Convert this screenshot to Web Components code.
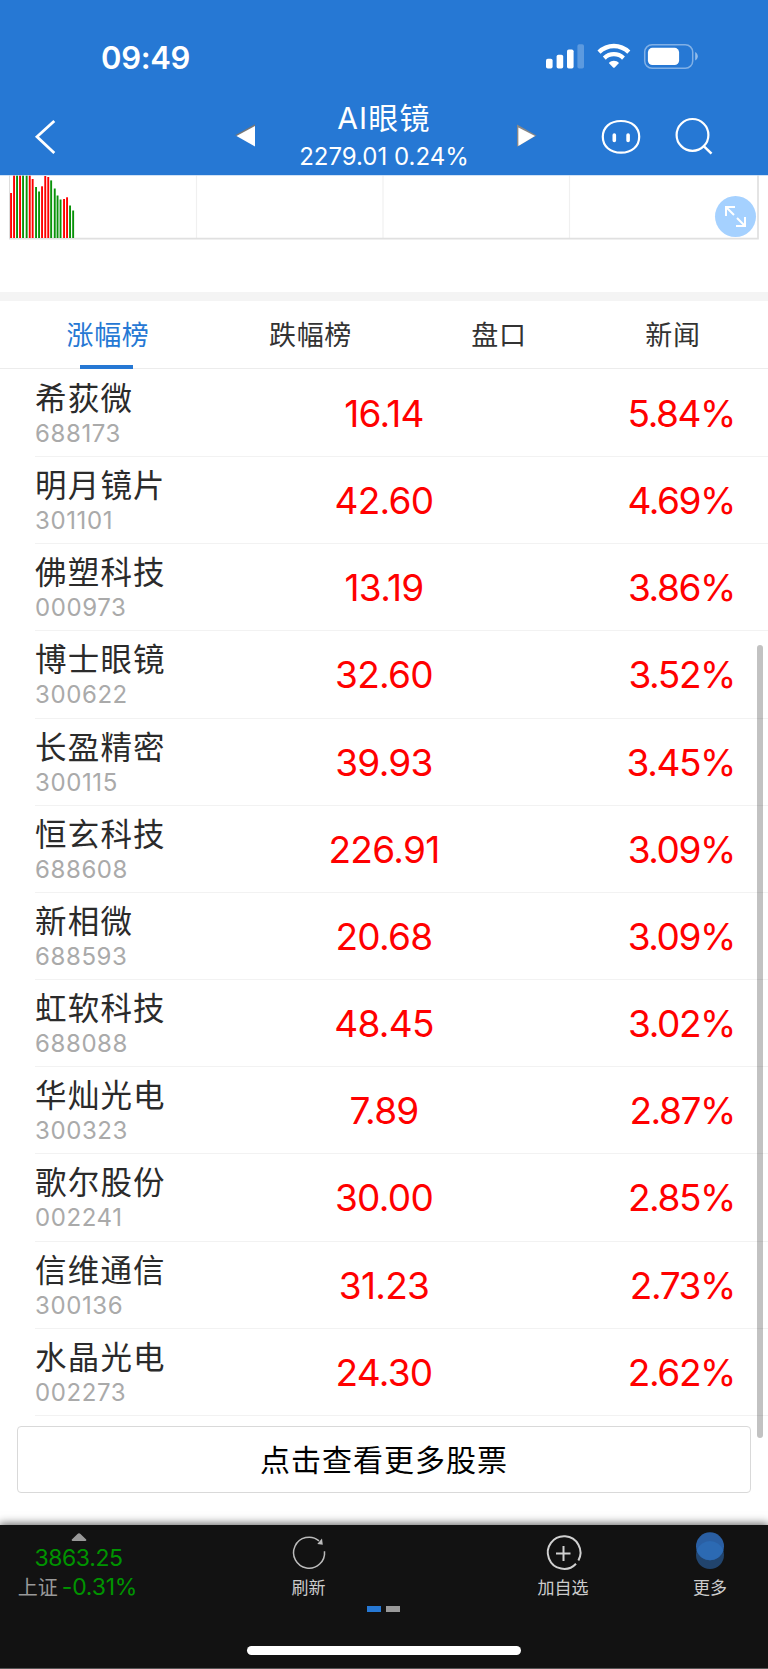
<!DOCTYPE html>
<html lang="zh-CN">
<head>
<meta charset="utf-8">
<meta name="viewport" content="width=device-width, initial-scale=1">
<title>AI眼镜</title>
<style>
    html, body { margin: 0; padding: 0; }
    body { background: #fff; font-family: Inter, "Noto Sans CJK SC", sans-serif; }
</style>
</head>
<body>
<stock-app></stock-app>

<script>
class StatusBar extends HTMLElement {
    constructor() {
        super();
        this.attachShadow({ mode: 'open' });
    }

    connectedCallback() {
        this.shadowRoot.innerHTML = `
            <style>
                :host { display: flex; justify-content: space-between; height: 98px; box-sizing: border-box; padding: 40px 70px 0 101px; color: #fff; }
                time { font-size: 31px; line-height: 35px; height: 34px; font-weight: 600; letter-spacing: -0.3px; }
                svg { display: block; }
            </style>
            <time>09:49</time>
            <svg width="153" height="30" viewBox="544 40 153 30" fill="#fff">
                <rect x="545" y="58.7" width="6.6" height="9.8" rx="1.8"/>
                <rect x="555.6" y="54.8" width="6.6" height="13.7" rx="1.8"/>
                <rect x="566" y="49.5" width="6.6" height="19" rx="1.8"/>
                <rect x="576.4" y="44.2" width="6.6" height="24.3" rx="1.8" opacity=".25"/>
                <g fill="none" stroke="#fff">
                    <path d="M598 52.2C606.5 44 619.3 44 627.8 52.2" stroke-width="4.4"/>
                    <path d="M603.3 58.1C608.8 52.9 617 52.9 622.5 58.1" stroke-width="4.2"/>
                </g>
                <path d="M607.8 63c2.8-2.9 7.4-2.9 10.2 0l-4.3 4.4q-.8.8-1.6 0z"/>
                <rect x="643.7" y="44.7" width="48" height="23.6" rx="7.4" fill="none" stroke="#fff" stroke-width="1.5" opacity=".42"/>
                <rect x="646.9" y="47.8" width="31.2" height="17.2" rx="4.6"/>
                <path d="M694.2 52v8.6c1.5-.8 2.6-2.4 2.6-4.3s-1.1-3.5-2.6-4.3z" opacity=".5"/>
            </svg>
        `;
    }
}

class NavHeader extends HTMLElement {
    constructor() {
        super();
        this.attachShadow({ mode: 'open' });
    }

    connectedCallback() {
        this.shadowRoot.innerHTML = `
            <style>
                :host { display: grid; grid-template-columns: 228px 312px 228px; height: 77px; color: #fff; }
                .back { padding: 20px 0 0 33px; }
                .middle { display: flex; justify-content: space-between; }
                .middle svg { margin-top: 25px; }
                .title { text-align: center; white-space: nowrap; }
                h1 { margin: 2px 0 0; font-size: 30px; line-height: 36px; font-weight: 400; letter-spacing: 1.2px; }
                p { margin: 7px 0 0; font-size: 24px; line-height: 28px; letter-spacing: 0; }
                .actions { display: flex; gap: 32px; padding: 19px 0 0 61px; }
                svg { display: block; flex: none; }
            </style>
            <div class="back">
                <svg width="24" height="36" viewBox="33 118 24 36"><path d="M54.3 121 37 136.7 54.3 153" fill="none" stroke="#fff" stroke-width="2.8"/></svg>
            </div>
            <div class="middle">
                <svg width="30" height="26" viewBox="228 123 30 26"><path d="M235 135.3 255 124.3v2.5L238 136z" fill="#777"/><path d="M236.5 136 255 126v20.5z" fill="#fff"/></svg>
                <div class="title"><h1>AI眼镜</h1><p>2279.01 0.24%</p></div>
                <svg width="30" height="26" viewBox="510 123 30 26"><path d="M517 124.5 536.5 135.5 517 146.8z" fill="#888"/><path d="M518.4 127.5 535 136 518.4 146z" fill="#fff"/></svg>
            </div>
            <div class="actions">
                <svg width="40" height="38" viewBox="601 117 40 38" fill="none" stroke="#fff">
                    <path d="M621 121c11 0 18.2 6.4 18.2 15.8s-7.2 15.9-18.2 15.9-18.2-6.5-18.2-15.9S610 121 621 121z" stroke-width="2.2"/>
                    <path d="M614.3 135.1v5.4M628.1 135.1v5.4" stroke-width="3.6" stroke-linecap="round"/>
                </svg>
                <svg width="40" height="38" viewBox="673 117 40 38" fill="none" stroke="#fff" stroke-width="2.2"><circle cx="692.5" cy="134.9" r="15.9"/><path d="m703.5 145.8 8 7.8" stroke-width="2.5"/></svg>
            </div>
        `;
    }
}

class VolumeChart extends HTMLElement {
    constructor() {
        super();
        this.attachShadow({ mode: 'open' });
    }

    connectedCallback() {
        // [x, top, r = up / g = down]
        const bars = [
            [11, 193, 'r'], [14, 175, 'r'], [17, 175, 'g'], [20, 175, 'r'], [23, 175, 'g'], [26.6, 175, 'g'], [29.7, 175, 'r'],
            [32.6, 179, 'r'], [36, 187, 'g'], [39, 191.5, 'g'], [42, 186.3, 'r'], [45.2, 176, 'r'], [48.2, 177, 'r'],
            [51.1, 180.4, 'g'], [54.7, 188.5, 'g'], [57.5, 195.5, 'g'], [60.5, 199.5, 'g'], [64, 199, 'r'], [67, 197.3, 'r'],
            [70, 205.5, 'g'], [73.1, 210.5, 'g']
        ];
        const rects = bars.map(([x, y, c]) =>
            `<rect x="${x - 0.9}" y="${y}" width="1.9" height="${238 - y}" fill="${c === 'r' ? '#f00' : '#0a930a'}"/>`).join('');

        this.shadowRoot.innerHTML = `
            <style>
                :host { display: block; position: relative; height: 117px; }
                svg { display: block; }
                button { position: absolute; left: 715px; top: 21px; width: 41px; height: 41px; border: 0; padding: 0; border-radius: 50%; background: #a5d1ff; }
            </style>
            <svg width="768" height="66" viewBox="0 175 768 66">
                <path d="M196.5 175v63M383 175v63M569.5 175v63" stroke="#f0f0f0" stroke-width="1.2"/>
                <path d="M9.5 175v63" stroke="#ddd"/>
                <path d="M9 238.7h749M758 175v64.5" stroke="#e0e0e0" stroke-width="1.7" fill="none"/>
                ${rects}
                <path d="M0 175.4h768" stroke="#bcd6f3" stroke-width=".8"/>
            </svg>
            <button aria-label="全屏">
                <svg width="41" height="41" viewBox="0 0 41 41" fill="none" stroke="#fff" stroke-width="2"><path d="M20 11H11v9M11 11l8 8M21 30h9v-9M30 30l-8-8"/></svg>
            </button>
        `;
    }
}

class TabBar extends HTMLElement {
    constructor() {
        super();
        this.attachShadow({ mode: 'open' });
    }

    connectedCallback() {
        this.shadowRoot.innerHTML = `
            <style>
                :host { display: block; border-top: 9px solid #f4f4f4; }
                nav { display: grid; grid-template-columns: 215px 190px 187px 161px; height: 68px; box-sizing: border-box; border-bottom: 1px solid #ececec; }
            </style>
            <nav><slot></slot></nav>
        `;
    }
}

class TabItem extends HTMLElement {
    constructor() {
        super();
        this.attachShadow({ mode: 'open' });
    }

    connectedCallback() {
        this.shadowRoot.innerHTML = `
            <style>
                :host { display: flex; flex-direction: column; align-items: center; justify-content: space-between; height: 68px; color: #333; font-size: 27px; line-height: 40px; letter-spacing: 0.7px; }
                :host([active]) { color: #2678d4; }
                span { padding: 15px 0 0 1px; }
                i { width: 53px; height: 4px; }
                :host([active]) i { background: #2678d4; margin-right: 2px; }
            </style>
            <span><slot></slot></span><i></i>
        `;
    }
}

class StockRow extends HTMLElement {
    constructor() {
        super();
        this.attachShadow({ mode: 'open' });
    }

    connectedCallback() {
        this.shadowRoot.innerHTML = `
            <style>
                :host { display: grid; grid-template-columns: 249px 200px 1fr; height: 87.2px; box-sizing: border-box; margin-left: 35px; padding-right: 33px; }
                :host { border-bottom: 1px solid #f2f2f2; }
                .name { color: #2b2b2b; font-size: 31.5px; line-height: 38px; height: 38px; margin-top: 10px; letter-spacing: 1.2px; white-space: nowrap; }
                .code { color: #aaa; font-size: 24px; line-height: 28px; height: 28px; margin-top: 2px; letter-spacing: .6px; }
                .price, .rate { color: #f00; font-size: 37px; line-height: 87px; white-space: nowrap; letter-spacing: -0.7px; }
                .price { text-align: center; }
                .rate { text-align: right; letter-spacing: -1.4px; }
            </style>
            <div>
                <div class="name">${this.getAttribute('name')}</div>
                <div class="code">${this.getAttribute('code')}</div>
            </div>
            <div class="price">${this.getAttribute('price')}</div>
            <div class="rate">${this.getAttribute('rate')}</div>
        `;
    }
}

class MoreButton extends HTMLElement {
    constructor() {
        super();
        this.attachShadow({ mode: 'open' });
    }

    connectedCallback() {
        this.shadowRoot.innerHTML = `
            <style>
                :host { display: block; margin: 10px 17px 0; }
                button { display: block; width: 100%; height: 67px; padding: 0 0 3px; border: 1.5px solid #d9d9d9; border-radius: 4px; background: #fff; color: #000; font: inherit; font-size: 30px; letter-spacing: 1px; }
            </style>
            <button><slot></slot></button>
        `;
    }
}

class BottomBar extends HTMLElement {
    constructor() {
        super();
        this.attachShadow({ mode: 'open' });
    }

    connectedCallback() {
        this.shadowRoot.innerHTML = `
            <style>
                :host { display: block; height: 144.5px; box-sizing: border-box; background: #121212; color: #ccc; border-bottom: 1px solid #555; box-shadow: 0 0 9px 1px rgba(0, 0, 0, .65); }
                .items { display: grid; grid-template-columns: 157px 303px 206px 88px; height: 81px; }
                .items > div { display: flex; flex-direction: column; align-items: center; white-space: nowrap; }
                .index { color: #009400; font-size: 23px; line-height: 28px; }
                .index svg { margin-top: 8.5px; }
                .value { margin-top: 3px; letter-spacing: -.4px; }
                .change { margin-top: 1px; padding-right: 2px; letter-spacing: -.2px; }
                .change b { font-weight: 400; color: #999; font-size: 20px; letter-spacing: 0; margin-right: 4px; }
                .label { font-size: 17px; line-height: 24px; margin-top: 1px; }
                svg { display: block; }
                .pager { display: flex; justify-content: center; gap: 5px; padding-right: 2px; }
                .pager i { width: 14px; height: 6px; background: #999; }
                .pager i:first-child { background: #2678d4; }
                .home { width: 274px; height: 9px; border-radius: 5px; background: #fff; margin: 34px auto 0; }
            </style>
            <div class="items">
                <div class="index">
                    <svg width="16" height="8" viewBox="0 0 16 8"><path d="m.8 6.6 5.7-5.7q1.5-1.3 3 0l5.7 5.7q.5 1.4-1 1.4H1.8q-1.5 0-1-1.4z" fill="#999"/></svg>
                    <div class="value">3863.25</div>
                    <div class="change"><b>上证</b>-0.31%</div>
                </div>
                <div>
                    <svg width="50" height="50" viewBox="283.5 1525 50 50" fill="none"><path d="M324 1551.2a15.5 15.5 0 1 1-5.5-10.4" stroke="#bbb" stroke-width="1.5"/><path d="m321.5 1538.5.8 6.2-5.5-.6z" fill="#bbb"/></svg>
                    <div class="label">刷新</div>
                </div>
                <div>
                    <svg width="50" height="50" viewBox="538 1525 50 50" fill="none" stroke="#d0d0d0" stroke-width="2"><path d="M578.4 1560.4A16.3 16.3 0 1 0 576 1563.7"/><path d="M556 1553.5h14.5M563.5 1546v15"/></svg>
                    <div class="label">加自选</div>
                </div>
                <div>
                    <svg width="50" height="50" viewBox="685 1525 50 50"><circle cx="710" cy="1555" r="14" fill="#21446d"/><circle cx="710" cy="1546.3" r="14" fill="#2a5fa3"/><path d="M696.7 1550.6a14 14 0 0 1 26.6 0 14 14 0 0 1-26.6 0z" fill="#2c6ab3"/></svg>
                    <div class="label">更多</div>
                </div>
            </div>
            <div class="pager"><i></i><i></i></div>
            <div class="home"></div>
        `;
    }
}

class StockApp extends HTMLElement {
    constructor() {
        super();
        this.attachShadow({ mode: 'open' });
    }

    connectedCallback() {
        const stocks = [
            ['希荻微', '688173', '16.14', '5.84%'],
            ['明月镜片', '301101', '42.60', '4.69%'],
            ['佛塑科技', '000973', '13.19', '3.86%'],
            ['博士眼镜', '300622', '32.60', '3.52%'],
            ['长盈精密', '300115', '39.93', '3.45%'],
            ['恒玄科技', '688608', '226.91', '3.09%'],
            ['新相微', '688593', '20.68', '3.09%'],
            ['虹软科技', '688088', '48.45', '3.02%'],
            ['华灿光电', '300323', '7.89', '2.87%'],
            ['歌尔股份', '002241', '30.00', '2.85%'],
            ['信维通信', '300136', '31.23', '2.73%'],
            ['水晶光电', '002273', '24.30', '2.62%']
        ];

        this.shadowRoot.innerHTML = `
            <style>
                :host { display: flex; flex-direction: column; position: relative; width: 768px; height: 1669px; overflow: hidden; background: #fff; }
                header { background: #2678d4; }
                main { padding-top: 0.8px; }
                bottom-bar { margin-top: auto; }
                .scrollbar { position: absolute; left: 757px; top: 645px; width: 5.5px; height: 793px; border-radius: 3px; background: rgba(0, 0, 0, .24); }
            </style>
            <header>
                <status-bar></status-bar>
                <nav-header></nav-header>
            </header>
            <volume-chart></volume-chart>
            <tab-bar>
                <tab-item active>涨幅榜</tab-item>
                <tab-item>跌幅榜</tab-item>
                <tab-item>盘口</tab-item>
                <tab-item>新闻</tab-item>
            </tab-bar>
            <main>
                ${stocks.map(([name, code, price, rate]) => `<stock-row name="${name}" code="${code}" price="${price}" rate="${rate}"></stock-row>`).join('')}
            </main>
            <more-button>点击查看更多股票</more-button>
            <bottom-bar></bottom-bar>
            <div class="scrollbar"></div>
        `;
    }
}

customElements.define('status-bar', StatusBar);
customElements.define('nav-header', NavHeader);
customElements.define('volume-chart', VolumeChart);
customElements.define('tab-bar', TabBar);
customElements.define('tab-item', TabItem);
customElements.define('stock-row', StockRow);
customElements.define('more-button', MoreButton);
customElements.define('bottom-bar', BottomBar);
customElements.define('stock-app', StockApp);
</script>
</body>
</html>
